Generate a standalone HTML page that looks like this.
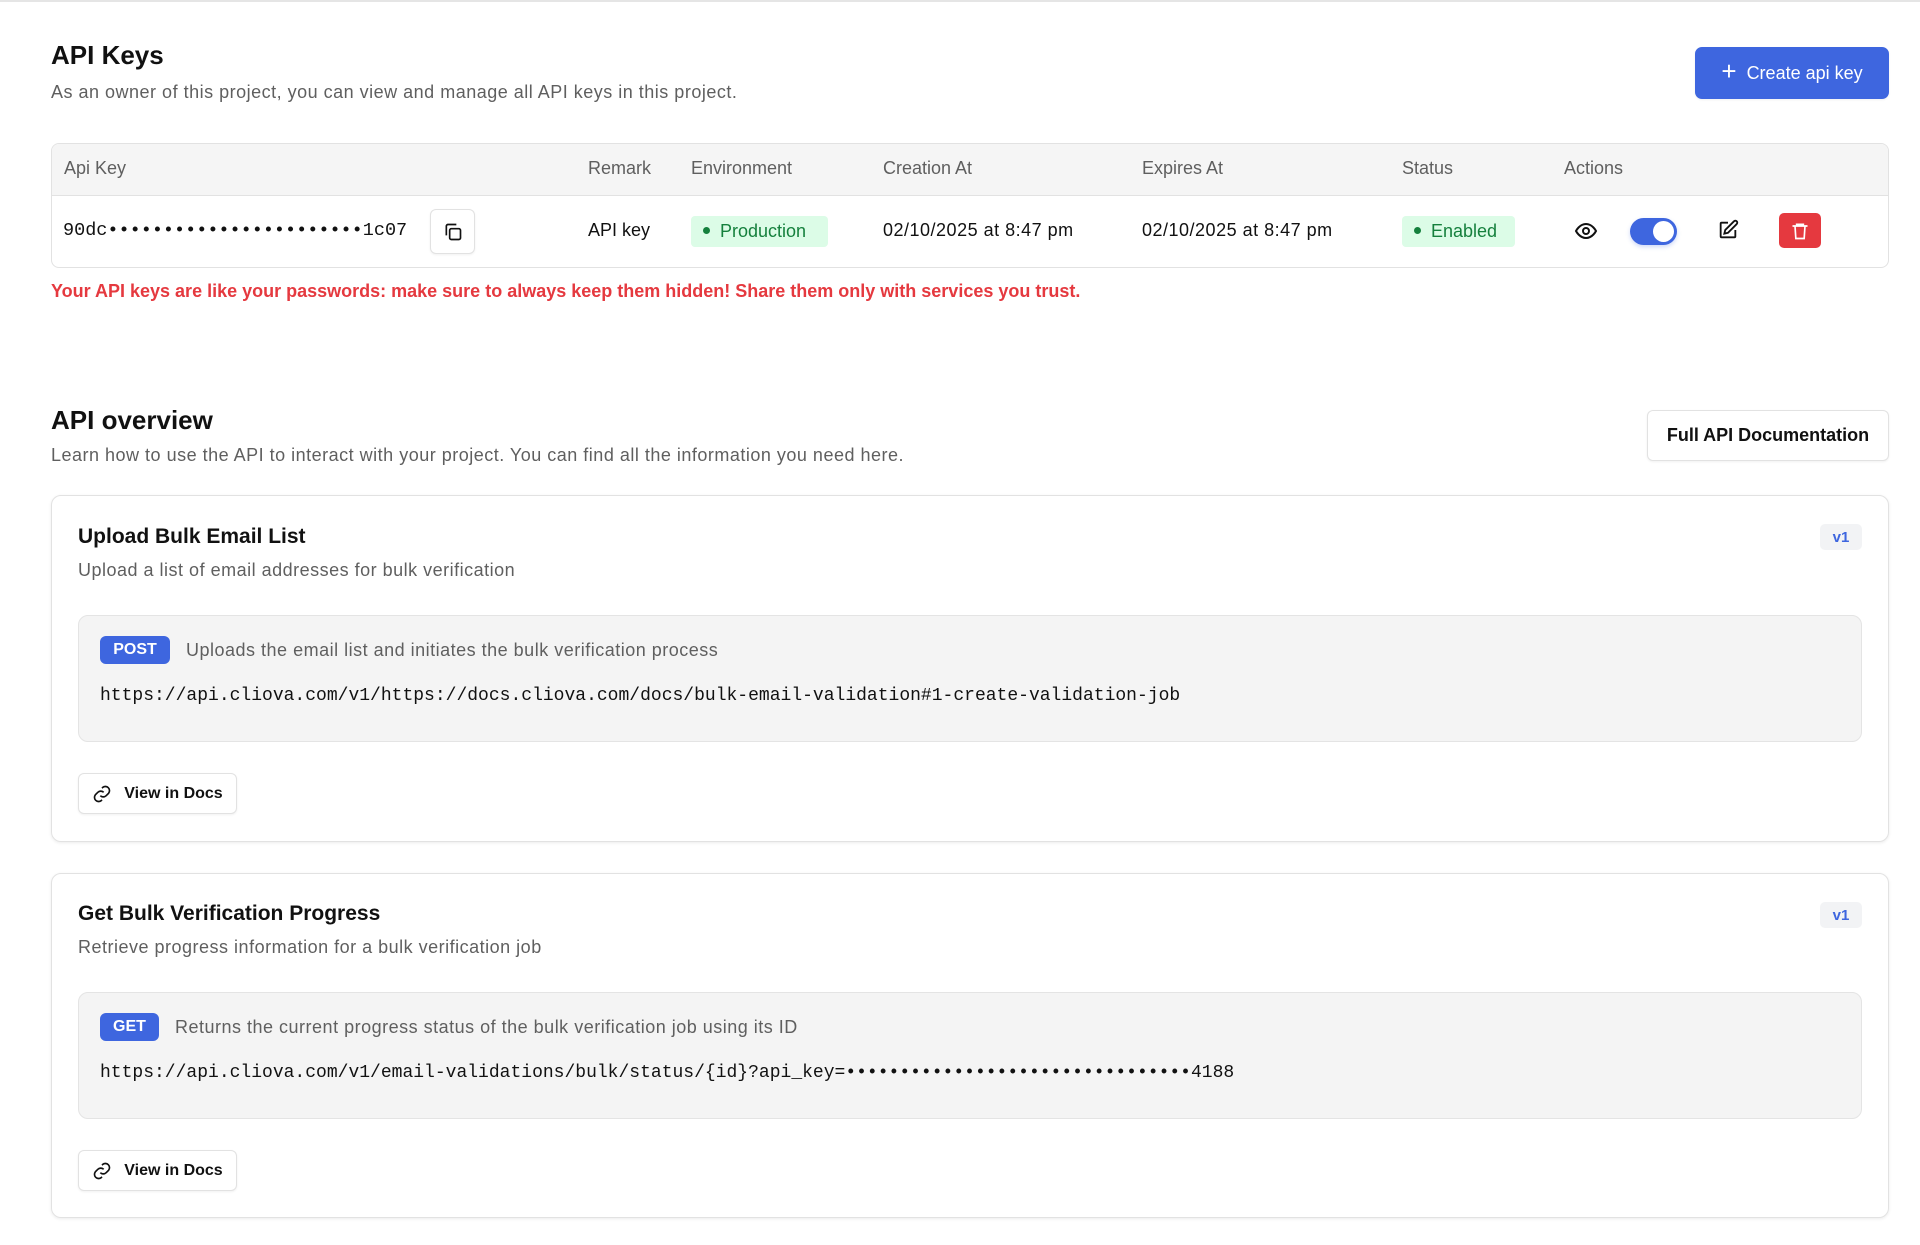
<!DOCTYPE html>
<html><head><meta charset="utf-8"><style>
*{box-sizing:border-box;margin:0;padding:0}
body{width:1920px;height:1245px;background:#fff;font-family:"Liberation Sans",sans-serif;color:#111;position:relative;overflow:hidden;border-top:2px solid #e5e5e5}
.a{position:absolute;white-space:nowrap}
.mono{font-family:"Liberation Mono",monospace}
.gray{color:#5f5f5f}
.ls{letter-spacing:0.5px}
.btn{position:absolute;border:1px solid #e2e2e2;border-radius:6px;background:#fff;box-shadow:0 1px 2px rgba(0,0,0,.06);display:flex;align-items:center;justify-content:center;gap:10px}
.card{position:absolute;left:51px;width:1838px;border:1px solid #e2e2e2;border-radius:10px;box-shadow:0 1px 3px rgba(0,0,0,.08)}
.inner{position:absolute;left:26px;width:1784px;height:127px;background:#f4f4f4;border:1px solid #e4e4e4;border-radius:10px}
.badge{position:absolute;background:#3e66df;color:#fff;font-weight:bold;font-size:16px;border-radius:6px;display:flex;align-items:center;justify-content:center}
.v1{position:absolute;right:26px;top:28px;width:42px;height:26px;background:#f2f3f5;border-radius:5px;color:#3e66df;font-weight:bold;font-size:15px;display:flex;align-items:center;justify-content:center}
</style></head><body>
<div class="a" style="left:51px;top:38px;font-size:26px;font-weight:bold">API Keys</div>
<div class="a gray ls" style="left:51px;top:80px;font-size:18px">As an owner of this project, you can view and manage all API keys in this project.</div>
<div class="btn" style="left:1695px;top:45px;width:194px;height:52px;background:#3e66df;border-color:#3e66df;color:#fff;font-size:18px;border-radius:7px"><span style="font-size:26px;font-weight:300;margin-top:-3px">+</span>Create api key</div>

<div style="position:absolute;left:51px;top:141px;width:1838px;height:125px;border:1px solid #e2e2e2;border-radius:8px;overflow:hidden">
<div style="height:52px;background:#f5f5f5;border-bottom:1px solid #e2e2e2"></div>
</div>
<div class="a gray" style="left:64px;top:156px;font-size:18px">Api Key</div>
<div class="a gray" style="left:588px;top:156px;font-size:18px">Remark</div>
<div class="a gray" style="left:691px;top:156px;font-size:18px">Environment</div>
<div class="a gray" style="left:883px;top:156px;font-size:18px">Creation At</div>
<div class="a gray" style="left:1142px;top:156px;font-size:18px">Expires At</div>
<div class="a gray" style="left:1402px;top:156px;font-size:18px">Status</div>
<div class="a gray" style="left:1564px;top:156px;font-size:18px">Actions</div>

<div class="a mono" style="left:63px;top:218px;font-size:18.5px">90dc•••••••••••••••••••••••1c07</div>
<div class="btn" style="left:430px;top:207px;width:45px;height:45px"><svg width="20" height="20" viewBox="0 0 24 24" fill="none" stroke="#111" stroke-width="2"><rect x="8" y="8" width="13" height="13" rx="2"/><path d="M4 16V5a2 2 0 0 1 2-2h10"/></svg></div>
<div class="a" style="left:588px;top:218px;font-size:18px">API key</div>
<div class="a" style="left:691px;top:214px;width:137px;height:31px;background:#dcfce7;border-radius:4px;color:#15803d;font-size:18px;padding:5px 0 0 12px"><span style="display:inline-block;width:7px;height:7px;border-radius:50%;background:#15803d;margin-right:10px;vertical-align:3px"></span>Production</div>
<div class="a ls" style="left:883px;top:218px;font-size:18px">02/10/2025 at 8:47 pm</div>
<div class="a ls" style="left:1142px;top:218px;font-size:18px">02/10/2025 at 8:47 pm</div>
<div class="a" style="left:1402px;top:214px;width:113px;height:31px;background:#dcfce7;border-radius:4px;color:#15803d;font-size:18px;padding:5px 0 0 12px"><span style="display:inline-block;width:7px;height:7px;border-radius:50%;background:#15803d;margin-right:10px;vertical-align:3px"></span>Enabled</div>
<svg class="a" style="left:1573px;top:217px" width="26" height="24" viewBox="0 0 24 24" fill="none" stroke="#111" stroke-width="2"><path d="M2 12s3.5-7 10-7 10 7 10 7-3.5 7-10 7S2 12 2 12z"/><circle cx="12" cy="12" r="3"/></svg>
<div class="a" style="left:1630px;top:216px;width:47px;height:27px;background:#3e66df;border-radius:14px;box-shadow:0 2px 4px rgba(62,102,223,.25)"><div style="position:absolute;right:3px;top:3px;width:21px;height:21px;border-radius:50%;background:#fff"></div></div>
<svg class="a" style="left:1717px;top:217px" width="22" height="22" viewBox="0 0 24 24" fill="none" stroke="#111" stroke-width="2"><path d="M12 4H5a1 1 0 0 0-1 1v14a1 1 0 0 0 1 1h14a1 1 0 0 0 1-1v-7"/><path d="M18.5 2.5a2.1 2.1 0 0 1 3 3L12 15l-4 1 1-4z"/></svg>
<div class="a" style="left:1779px;top:211px;width:42px;height:35px;background:#e5393f;border-radius:5px;display:flex;align-items:center;justify-content:center"><svg width="20" height="20" viewBox="0 0 24 24" fill="none" stroke="#fff" stroke-width="2"><path d="M3 6h18M8 6V4h8v2M6 6l1 15h10l1-15"/></svg></div>

<div class="a" style="left:51px;top:279px;font-size:18px;font-weight:bold;color:#e5393f">Your API keys are like your passwords: make sure to always keep them hidden! Share them only with services you trust.</div>

<div class="a" style="left:51px;top:403px;font-size:26px;font-weight:bold">API overview</div>
<div class="a gray ls" style="left:51px;top:443px;font-size:18px">Learn how to use the API to interact with your project. You can find all the information you need here.</div>
<div class="btn" style="left:1647px;top:408px;width:242px;height:51px;font-size:18px;font-weight:bold;color:#111">Full API Documentation</div>

<div class="card" style="top:493px;height:347px">
<div class="a" style="left:26px;top:29px;font-size:21px;font-weight:bold">Upload Bulk Email List</div>
<div class="a gray ls" style="left:26px;top:64px;font-size:18px">Upload a list of email addresses for bulk verification</div>
<div class="v1">v1</div>
<div class="inner" style="top:119px">
<div class="badge" style="left:21px;top:20px;width:70px;height:28px">POST</div>
<div class="a gray ls" style="left:107px;top:24px;font-size:18px">Uploads the email list and initiates the bulk verification process</div>
<div class="a mono" style="left:21px;top:70px;font-size:18px">https://api.cliova.com/v1/https://docs.cliova.com/docs/bulk-email-validation#1-create-validation-job</div>
</div>
<div class="btn" style="left:26px;top:277px;width:159px;height:41px;font-size:16px;font-weight:bold;color:#111;gap:12px"><svg width="20" height="20" viewBox="0 0 24 24" fill="none" stroke="#111" stroke-width="2"><path d="M10 14a5 5 0 0 0 7 0l3-3a5 5 0 0 0-7-7l-1 1"/><path d="M14 10a5 5 0 0 0-7 0l-3 3a5 5 0 0 0 7 7l1-1"/></svg>View in Docs</div>
</div>

<div class="card" style="top:871px;height:345px">
<div class="a" style="left:26px;top:28px;font-size:21px;font-weight:bold">Get Bulk Verification Progress</div>
<div class="a gray ls" style="left:26px;top:63px;font-size:18px">Retrieve progress information for a bulk verification job</div>
<div class="v1">v1</div>
<div class="inner" style="top:118px">
<div class="badge" style="left:21px;top:20px;width:59px;height:28px">GET</div>
<div class="a gray ls" style="left:96px;top:24px;font-size:18px">Returns the current progress status of the bulk verification job using its ID</div>
<div class="a mono" style="left:21px;top:70px;font-size:18px">https://api.cliova.com/v1/email-validations/bulk/status/{id}?api_key=••••••••••••••••••••••••••••••••4188</div>
</div>
<div class="btn" style="left:26px;top:276px;width:159px;height:41px;font-size:16px;font-weight:bold;color:#111;gap:12px"><svg width="20" height="20" viewBox="0 0 24 24" fill="none" stroke="#111" stroke-width="2"><path d="M10 14a5 5 0 0 0 7 0l3-3a5 5 0 0 0-7-7l-1 1"/><path d="M14 10a5 5 0 0 0-7 0l-3 3a5 5 0 0 0 7 7l1-1"/></svg>View in Docs</div>
</div>
</body></html>
